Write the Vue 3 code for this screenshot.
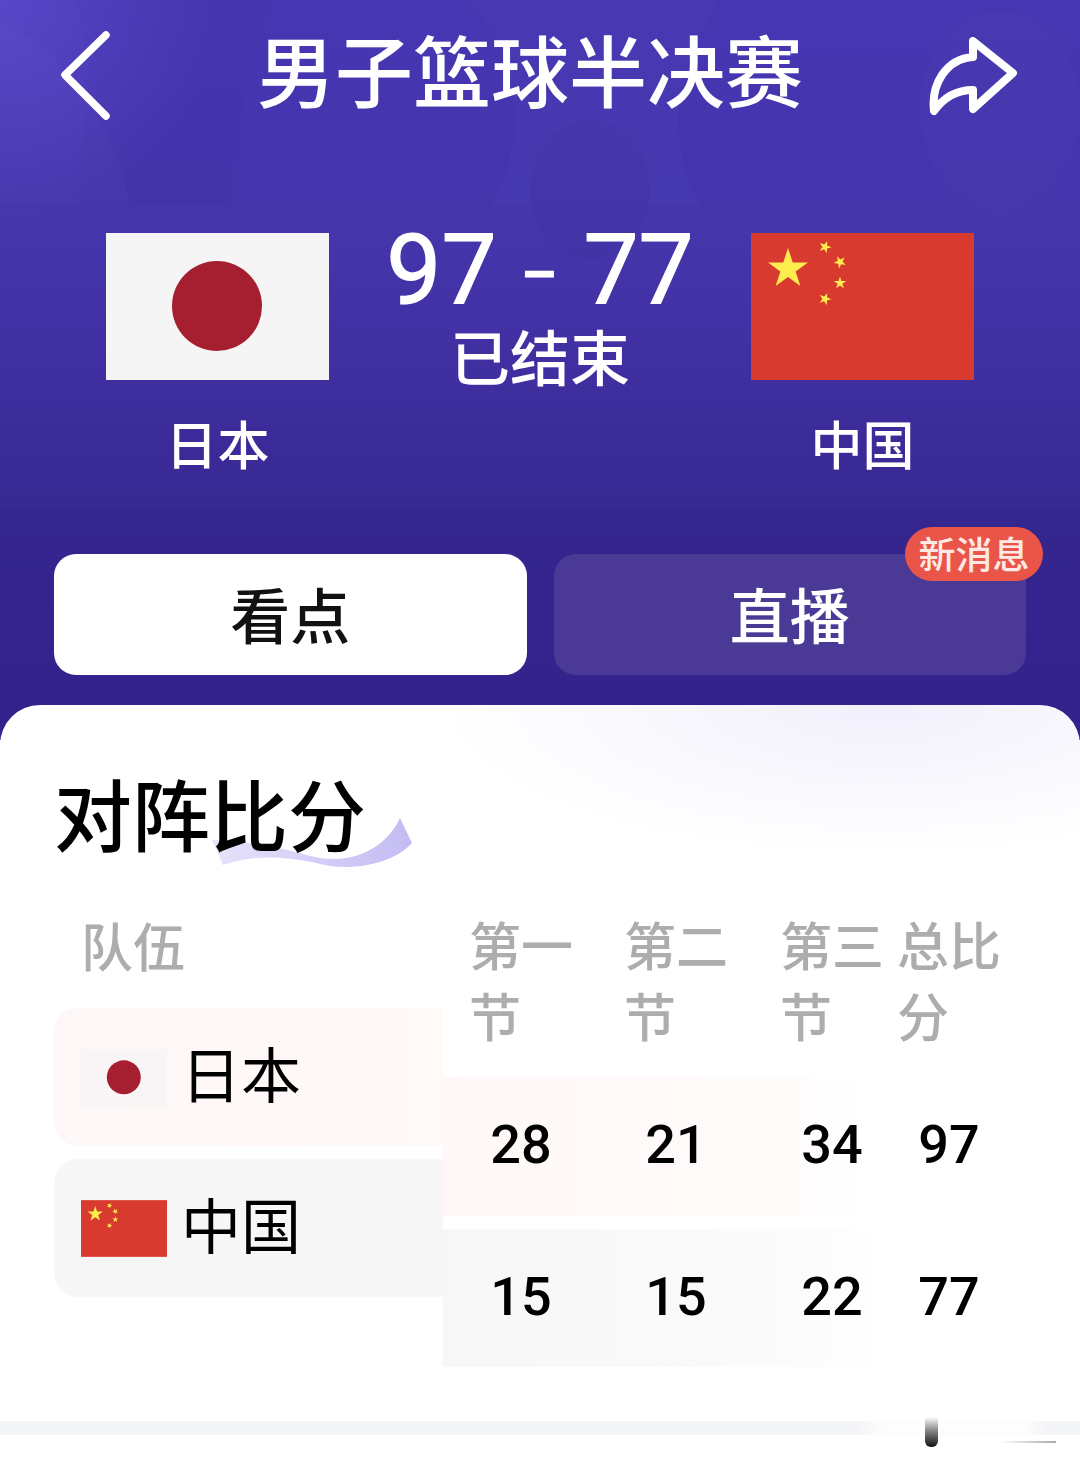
<template>
  <div class="page">
    <section class="hero">
      <svg class="hero-bg" viewBox="0 0 1080 740" preserveAspectRatio="none">
        <path d="M0 20 C60 50 110 110 130 205 L0 205 Z" fill="#fff" opacity="0.02" />
        <path d="M75 0 C95 60 85 120 75 205 L230 205 C240 120 250 60 270 0 Z" fill="#000" opacity="0.012" />
        <path d="M470 0 C520 60 530 140 490 205 L700 205 C660 130 680 60 720 0 Z" fill="#fff" opacity="0.014" />
        <ellipse cx="590" cy="190" rx="60" ry="70" fill="#000" opacity="0.02" />
        <ellipse cx="1000" cy="110" rx="80" ry="100" fill="#fff" opacity="0.012" />
        <rect x="0" y="207" width="1080" height="300" fill="#fff" opacity="0.012" />
      </svg>
      <header class="nav">
        <svg class="back" viewBox="58 25 56 96" fill="none" stroke="#fff" stroke-width="7.5" stroke-linecap="round" stroke-linejoin="round">
          <path d="M106 35 L65 75 L106 116" />
        </svg>
        <h1 class="nav-title">男子篮球半决赛</h1>
        <svg class="share" viewBox="924 27 98 92" fill="none" stroke="#fff" stroke-width="8" stroke-linejoin="round" stroke-linecap="round">
          <path d="M973 41 L1013 73 L973 109 L973 90 C956 90 944 97 934 111 C931 84 946 59 973 57 Z" />
        </svg>
      </header>

      <div class="match">
        <div class="team">
          <svg class="flag-big" viewBox="0 0 223 147"><rect width="223" height="147" fill="#f5f5f5" /><circle cx="111" cy="73" r="45" fill="#a51f30" /></svg>
          <div class="team-name">日本</div>
        </div>
        <div class="score">
          <div class="score-num"><span>97</span><span class="score-dash">-</span><span>77</span></div>
          <div class="score-state">已结束</div>
        </div>
        <div class="team">
          <svg class="flag-big" viewBox="0 0 223 147">
            <rect width="223" height="147" fill="#d93a30" />
            <polygon v-for="s in stars" :key="s.x" :points="starPoints(s)" fill="#fdec4e" />
          </svg>
          <div class="team-name">中国</div>
        </div>
      </div>

      <div class="tabs">
        <div class="tab tab-on">看点</div>
        <div class="tab">直播<span class="badge">新消息</span></div>
      </div>
    </section>

    <section class="card">
      <div class="card-title">
        <svg class="swoosh" viewBox="205 810 215 65">
          <defs>
            <linearGradient id="sw" x1="0" x2="1" y1="0" y2="0">
              <stop offset="0" stop-color="#e6e3fb" />
              <stop offset="1" stop-color="#c3bcf3" />
            </linearGradient>
          </defs>
          <path d="M212 840 C250 842 285 848 310 856 C350 866 385 850 400 818 L412 843 C395 862 360 870 330 866 C295 858 260 852 223 865 Z" fill="url(#sw)" />
        </svg>
        <h2>对阵比分</h2>
      </div>

      <div class="board">
        <div class="teams-col">
          <div class="col-head">队伍</div>
          <div v-for="r in rows" :key="r.name" class="team-row" :class="r.tone">
            <svg v-if="r.name === '日本'" class="flag-small" viewBox="0 0 223 147"><rect width="223" height="147" fill="#f9f5f6" /><circle cx="111" cy="73" r="44" fill="#a51f30" /></svg>
            <svg v-else class="flag-small" viewBox="0 0 223 147">
              <rect width="223" height="147" fill="#d93a30" />
              <polygon v-for="s in stars" :key="s.x" :points="starPoints(s, 1.25)" fill="#fdec4e" />
            </svg>
            <span>{{ r.name }}</span>
          </div>
        </div>

        <div class="scores-col">
          <div class="score-grid">
            <div v-for="h in heads" :key="h" class="score-head"><span>{{ h }}</span></div>
          </div>
          <div v-for="r in rows" :key="r.name" class="score-grid score-row" :class="r.tone">
            <div v-for="(n, i) in r.scores" :key="i" class="score-cell"><span>{{ n }}</span></div>
          </div>
        </div>
      </div>
    </section>

    <div class="strip"></div>
    <div class="smudge"></div>
    <div class="smudge-bar"></div>
    <div class="smudge-line"></div>
  </div>
</template>

<script setup>
const heads = ['第一节', '第二节', '第三节', '总比分']

const rows = [
  { name: '日本', tone: 'tone-jp', scores: [28, 21, 34, 97] },
  { name: '中国', tone: 'tone-cn', scores: [15, 15, 22, 77] }
]

const stars = [
  { x: 37, y: 36, r: 21, a: 0 },
  { x: 74, y: 14, r: 6.5, a: 20 },
  { x: 89, y: 29, r: 6.5, a: 45 },
  { x: 89, y: 50, r: 6.5, a: 0 },
  { x: 74, y: 66, r: 6.5, a: 20 }
]

function starPoints(s, scale = 1) {
  const pts = []
  const outer = s.r < 10 ? s.r * scale : s.r
  for (let i = 0; i < 10; i++) {
    const rad = i % 2 === 0 ? outer : outer * 0.382
    const ang = ((s.a - 90 + i * 36) * Math.PI) / 180
    pts.push(`${(s.x + Math.cos(ang) * rad).toFixed(2)},${(s.y + Math.sin(ang) * rad).toFixed(2)}`)
  }
  return pts.join(' ')
}
</script>

<style>
html,
body {
  margin: 0;
  background: #fff;
}
</style>

<style scoped>
.page {
  position: relative;
  width: 1080px;
  height: 1470px;
  overflow: hidden;
  background: #fff;
  font-family: "Noto Sans CJK SC", "Noto Sans", sans-serif;
}

.hero {
  position: relative;
  height: 740px;
  box-sizing: border-box;
  background:
    radial-gradient(circle at 0 0, rgba(110, 90, 225, 0.45), rgba(110, 90, 225, 0) 220px),
    linear-gradient(180deg, #4636b2 0, #4435ad 200px, #3f2fa3 330px, #35258f 530px, #33228c 740px);
  color: #fff;
}

.hero-bg {
  position: absolute;
  left: 0;
  top: 0;
  width: 1080px;
  height: 740px;
}

.nav {
  position: relative;
  display: flex;
  align-items: center;
  justify-content: space-between;
  height: 146px;
  padding: 0 58px;
}

.back {
  width: 56px;
  height: 96px;
}

.share {
  width: 98px;
  height: 92px;
}

.nav-title {
  flex: 1;
  margin: 0 0 10px;
  padding-left: 22px;
  text-align: center;
  font-size: 78px;
  font-weight: 500;
  line-height: 1;
}

.match {
  position: relative;
  display: flex;
  justify-content: space-between;
  padding: 87px 106px 0;
}

.team {
  display: flex;
  flex-direction: column;
  align-items: center;
  width: 223px;
}

.flag-big {
  display: block;
  width: 223px;
  height: 147px;
}

.team-name {
  margin-top: 33px;
  font-size: 52px;
  font-weight: 500;
  line-height: 60px;
}

.score {
  display: flex;
  flex-direction: column;
  align-items: center;
}

.score-num {
  display: flex;
  align-items: center;
  gap: 31px;
  height: 84px;
  margin-top: -4px;
  font-family: Roboto, sans-serif;
  font-size: 98px;
  line-height: 84px;
  -webkit-text-stroke: 1.2px #fff;
}

.score-dash {
  display: block;
  transform: scaleX(1.5);
  font-size: 76px;
  margin: 0 2px;
}

.score-state {
  margin-top: 7px;
  font-size: 60px;
  font-weight: 500;
  line-height: 70px;
}

.tabs {
  position: relative;
  display: flex;
  gap: 27px;
  margin-top: 81px;
  padding: 0 54px;
}

.tab {
  position: relative;
  flex: 1;
  height: 121px;
  border-radius: 22px;
  background: #4a3a96;
  font-size: 60px;
  font-weight: 500;
  line-height: 117px;
  text-align: center;
}

.tab-on {
  background: #fff;
  color: #111;
}

.badge {
  position: absolute;
  right: -17px;
  top: -27px;
  width: 138px;
  height: 54px;
  border-radius: 27px;
  background: #ea5549;
  color: #ffe9e4;
  font-size: 37px;
  font-weight: 500;
  line-height: 52px;
}

.card {
  position: relative;
  margin-top: -35px;
  border-radius: 40px 40px 0 0;
  height: 700px;
  box-sizing: border-box;
  padding: 62px 54px 0;
  background:
    radial-gradient(ellipse 440px 150px at 880px 0, rgba(222, 217, 247, 0.4), rgba(255, 255, 255, 0)),
    #fff;
}

.card-title {
  position: relative;
  height: 90px;
}

.card-title h2 {
  position: relative;
  margin: 0;
  font-size: 78px;
  font-weight: 500;
  line-height: 90px;
  color: #000;
}

.swoosh {
  position: absolute;
  left: 151px;
  top: 43px;
  width: 215px;
  height: 65px;
}

.board {
  display: flex;
  margin-top: 53px;
}

.teams-col {
  width: 389px;
}

.col-head {
  height: 98px;
  padding-left: 27px;
  box-sizing: border-box;
  margin-top: -2px;
  padding-top: 1px;
  margin-bottom: 2px;
  font-size: 52px;
  font-weight: 500;
  line-height: 71px;
  color: #adadb0;
}

.team-row {
  display: flex;
  align-items: center;
  gap: 14px;
  height: 138px;
  margin-bottom: 13px;
  padding-left: 27px;
  border-radius: 24px 0 0 24px;
  font-size: 60px;
  color: #000;
}

.team-row span {
  margin-top: -12px;
}

.flag-small {
  display: block;
  width: 86px;
  height: 57px;
}

.tone-jp {
  background: linear-gradient(90deg, #fef7f7, #fff9f7);
}

.tone-cn {
  background: #f7f7f8;
}

.scores-col {
  width: 583px;
}

.score-grid {
  display: grid;
  grid-template-columns: 155px 156px 117px 155px;
}

.score-head {
  height: 167px;
  margin-top: -2px;
  margin-bottom: 2px;
  padding-left: 26px;
  font-size: 52px;
  font-weight: 500;
  line-height: 71px;
  color: #adadb0;
}

.score-head span {
  display: block;
  width: 106px;
}

.score-row {
  height: 139px;
  margin-bottom: 13px;
}

.score-row.tone-jp {
  background: linear-gradient(90deg, #fff8f7, #fffafa 55%, #fff 72%);
}

.score-row.tone-cn {
  height: 138px;
  background: linear-gradient(90deg, #f7f7f8, #fbfbfb 60%, #fff 75%);
}

.score-cell {
  padding-left: 28px;
  font-family: Roboto, sans-serif;
  font-size: 54px;
  font-weight: 500;
  line-height: 136px;
  color: #000;
}

.score-cell span {
  display: block;
  width: 100px;
  text-align: center;
}

.strip {
  position: absolute;
  left: 0;
  right: 0;
  top: 1421px;
  height: 14px;
  background: #f3f4f6;
}

.smudge {
  position: absolute;
  left: 855px;
  top: 1416px;
  width: 195px;
  height: 30px;
  background: linear-gradient(90deg, rgba(255, 255, 255, 0), rgba(255, 255, 255, 0.85) 15%, rgba(255, 255, 255, 0.85) 85%, rgba(255, 255, 255, 0));
}

.smudge-bar {
  position: absolute;
  left: 925px;
  top: 1417px;
  width: 13px;
  height: 30px;
  border-radius: 0 0 6px 6px;
  background: linear-gradient(180deg, rgba(40, 40, 40, 0), rgba(40, 40, 40, 0.55) 45%, #111);
}

.smudge-line {
  position: absolute;
  left: 1000px;
  top: 1441px;
  width: 56px;
  height: 2px;
  background: linear-gradient(90deg, rgba(170, 170, 170, 0), #aaa);
}
</style>
